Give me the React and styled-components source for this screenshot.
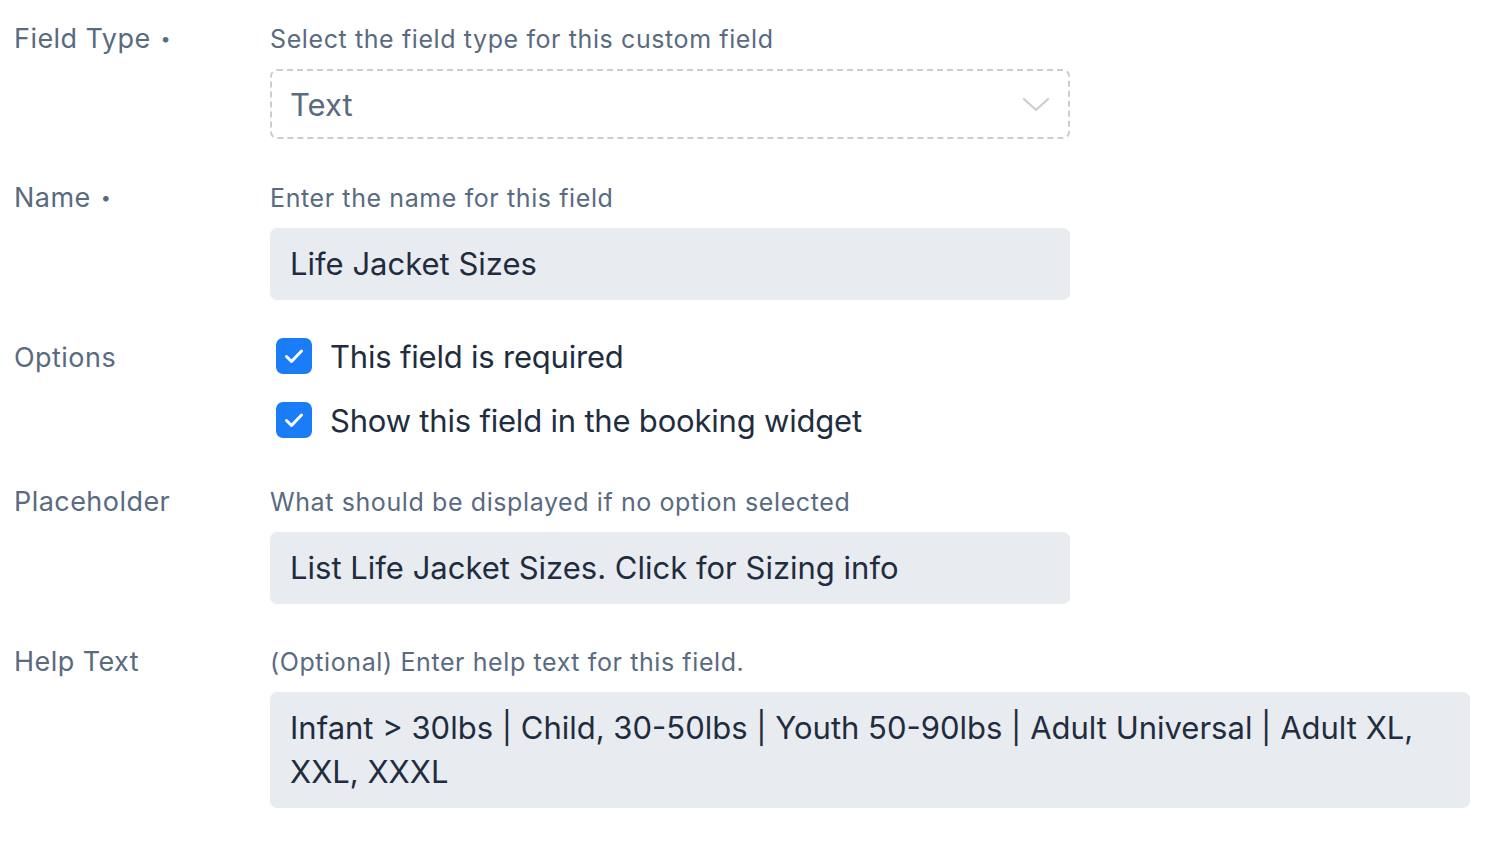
import styled, { createGlobalStyle } from "styled-components";

const GlobalStyle = createGlobalStyle`
  body {
    margin: 0;
    background: #fff;
    font-family: Inter, "Noto Sans", sans-serif;
  }
`;

const Form = styled.div`
  padding: 24px 24px 0 14px;
  display: flex;
  flex-direction: column;
`;

const Row = styled.div`
  display: grid;
  grid-template-columns: 256px 1fr;
  margin-top: ${(p) => p.$gap || 0}px;
`;

const Label = styled.div`
  font-size: 27px;
  line-height: 30px;
  letter-spacing: 0.45px;
  color: #5a6a7f;
  padding-top: ${(p) => p.$offset || 0}px;
  white-space: nowrap;
`;

const Dot = styled.span`
  font-size: 18px;
  margin-left: 10px;
  vertical-align: 3px;
`;

const Field = styled.div`
  display: flex;
  flex-direction: column;
`;

const Hint = styled.div`
  font-size: 25px;
  line-height: 30px;
  letter-spacing: 0.6px;
  color: #5a6a7f;
  margin-bottom: 15px;
`;

const Input = styled.div`
  width: ${(p) => p.$width || 800}px;
  box-sizing: border-box;
  padding: 14px 20px;
  font-size: 31px;
  line-height: 44px;
  color: #1f2d3f;
  background: #e8ebf0;
  border-radius: 7px;
`;

const Select = styled.div`
  width: 800px;
  height: 70px;
  box-sizing: border-box;
  padding: 0 18px;
  border: 2px dashed #c9cdd4;
  border-radius: 7px;
  display: flex;
  align-items: center;
  justify-content: space-between;
  font-size: 31px;
  color: #5a6a7f;
`;

const Checks = styled.div`
  display: flex;
  flex-direction: column;
  gap: 20px;
  padding-left: 6px;
`;

const CheckRow = styled.label`
  display: flex;
  align-items: center;
  gap: 18px;
  height: 44px;
  font-size: 31px;
  letter-spacing: -0.2px;
  color: #1f2d3f;
`;

const Box = styled.span`
  width: 36px;
  height: 36px;
  border-radius: 7px;
  background: #1a7cf6;
  display: flex;
  align-items: center;
  justify-content: center;
`;

const Check = () => (
  <Box>
    <svg width="24" height="24" viewBox="0 0 24 24" fill="none">
      <path
        d="M4.5 12.5l5 5 10-10.5"
        stroke="#fff"
        strokeWidth="3"
        strokeLinecap="round"
        strokeLinejoin="round"
      />
    </svg>
  </Box>
);

const Chevron = () => (
  <svg width="28" height="16" viewBox="0 0 28 16" fill="none">
    <path
      d="M2 3l12 11 12-11"
      stroke="#c9ced6"
      strokeWidth="2.2"
      strokeLinecap="round"
      strokeLinejoin="round"
    />
  </svg>
);

export default function App() {
  return (
    <>
      <GlobalStyle />
      <Form>
        <Row>
          <Label>
            Field Type<Dot>•</Dot>
          </Label>
          <Field>
            <Hint>Select the field type for this custom field</Hint>
            <Select>
              <span>Text</span>
              <Chevron />
            </Select>
          </Field>
        </Row>

        <Row $gap={44}>
          <Label>
            Name<Dot>•</Dot>
          </Label>
          <Field>
            <Hint>Enter the name for this field</Hint>
            <Input>Life Jacket Sizes</Input>
          </Field>
        </Row>

        <Row $gap={34}>
          <Label $offset={9}>Options</Label>
          <Checks>
            <CheckRow>
              <Check />
              This field is required
            </CheckRow>
            <CheckRow>
              <Check />
              Show this field in the booking widget
            </CheckRow>
          </Checks>
        </Row>

        <Row $gap={45}>
          <Label>Placeholder</Label>
          <Field>
            <Hint>What should be displayed if no option selected</Hint>
            <Input>List Life Jacket Sizes. Click for Sizing info</Input>
          </Field>
        </Row>

        <Row $gap={43}>
          <Label>Help Text</Label>
          <Field>
            <Hint>(Optional) Enter help text for this field.</Hint>
            <Input $width={1200}>
              Infant &gt; 30lbs | Child, 30-50lbs | Youth 50-90lbs | Adult
              Universal | Adult XL, XXL, XXXL
            </Input>
          </Field>
        </Row>
      </Form>
    </>
  );
}
